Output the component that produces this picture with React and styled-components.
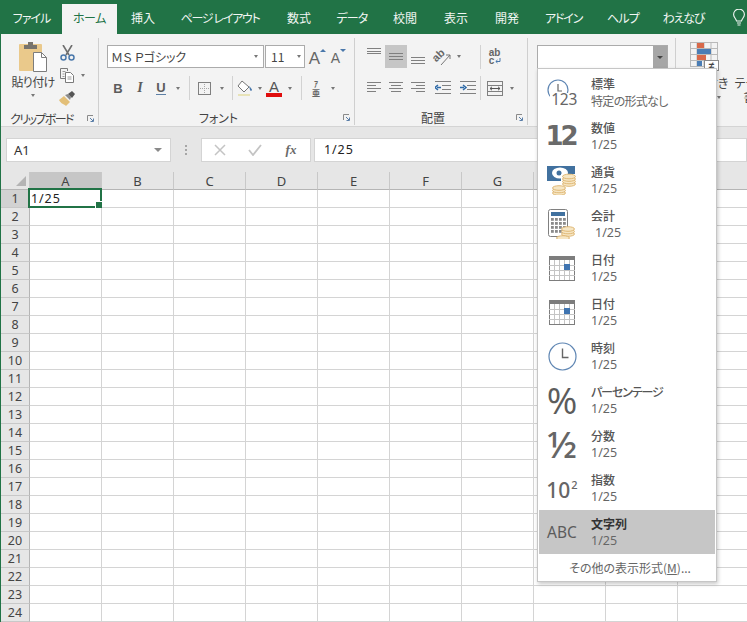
import React from 'react'
import styled, { createGlobalStyle } from 'styled-components';

const JP = `"Noto Sans CJK JP", "Noto Sans", sans-serif`;
const LATIN = `"Noto Sans", "Noto Sans CJK JP", sans-serif`;

const Global = createGlobalStyle`
    html, body { margin: 0; padding: 0; background: #fff; }
    * { box-sizing: border-box; }
`;

const Shell = styled.div`
    position: relative;
    width: 747px;
    height: 622px;
    overflow: hidden;
    border-left: 1px solid #217346;
    background: #fff;
    font-family: ${JP};
    font-feature-settings: "palt";
    font-size: 12px;
    color: #444;
`;

const Tabs = styled.div`
    display: flex;
    height: 34px;
    padding-top: 4px;
    background: #217346;
`;

const Tab = styled.div`
    flex: none;
    width: ${p => p.$w}px;
    display: flex;
    align-items: center;
    justify-content: center;
    padding-bottom: 3px;
    font-size: 12px;
    letter-spacing: ${p => p.$ls ?? 0}px;
    color: ${p => p.$active ? '#217346' : '#f1f6f3'};
    background: ${p => p.$active ? '#f3f3f3' : 'transparent'};
`;

const Ribbon = styled.div`
    display: flex;
    height: 93px;
    padding: 4px 0 1px;
    overflow: hidden;
    background: #f3f3f3;
    border-bottom: 1px solid #d4d4d4;
`;

const Group = styled.div`
    flex: none;
    display: flex;
    flex-direction: column;
    width: ${p => p.$w}px;
    padding-top: ${p => p.$pt ?? 7}px;
    border-right: ${p => p.$open ? 'none' : '1px solid #cfcfcf'};
`;

const GroupBody = styled.div`
    flex: 1;
    display: flex;
    flex-direction: ${p => p.$row ? 'row' : 'column'};
    gap: ${p => p.$gap ?? 0}px;
    padding-left: ${p => p.$pl}px;
`;

const GroupLabel = styled.div`
    flex: none;
    display: flex;
    align-items: center;
    height: 16px;
    font-size: 12px;
    color: #444;
`;

const LabelText = styled.span`
    flex: 1;
    text-align: center;
    white-space: nowrap;
    letter-spacing: ${p => p.$ls ?? 0}px;
`;

const Launcher = styled.span`
    flex: none;
    width: 16px;
    display: flex;
    justify-content: center;
`;

const ToolRow = styled.div`
    display: flex;
    align-items: center;
    height: ${p => p.$h ?? 23}px;
`;

const Btn = styled.div`
    flex: none;
    width: ${p => p.$w}px;
    height: 100%;
    display: flex;
    align-items: center;
    justify-content: center;
    background: ${p => p.$active ? '#c6c6c6' : 'transparent'};
    color: #5c5c5c;
`;

const Drop = styled.div`
    flex: none;
    width: ${p => p.$w ?? 8}px;
    height: 100%;
    display: flex;
    align-items: center;
    justify-content: center;
    &::after {
        content: '';
        border-left: 2.5px solid transparent;
        border-right: 2.5px solid transparent;
        border-top: 3px solid #777;
    }
`;

const Sep = styled.div`
    flex: none;
    width: 1px;
    height: 24px;
    margin-left: ${p => p.$ml ?? 0}px;
    background: #d2d2d2;
`;

const Select = styled.div`
    flex: none;
    display: flex;
    align-items: center;
    width: ${p => p.$w}px;
    height: 23px;
    margin-right: 1px;
    padding-left: ${p => p.$pl ?? 5}px;
    background: #fff;
    border: 1px solid #ababab;
    font-size: 12px;
    color: #444;
`;

const SelectText = styled.span`
    flex: 1;
    white-space: nowrap;
`;

const BoldLetter = styled.span`
    font-family: "Liberation Sans", sans-serif;
    font-weight: 700;
    font-size: 13px;
    color: #5c5c5c;
`;

const ItalicLetter = styled.span`
    font-family: "Liberation Serif", serif;
    font-style: italic;
    font-weight: 700;
    font-size: 14px;
    color: #5c5c5c;
`;

const UnderLetter = styled(BoldLetter)`
    border-bottom: 1.5px solid #5c7fa5;
    line-height: 13px;
`;

const GrowLetter = styled.span`
    position: relative;
    font-family: "Liberation Sans", sans-serif;
    font-size: ${p => p.$shrink ? 14 : 17}px;
    line-height: 17px;
    margin-top: 3px;
    margin-right: 5px;
    color: #666;
    &::after {
        content: '';
        position: absolute;
        top: ${p => p.$shrink ? -1 : -1}px;
        right: -6px;
        border-left: 3px solid transparent;
        border-right: 3px solid transparent;
        ${p => p.$shrink ? 'border-top: 3px solid #4a78ab;' : 'border-bottom: 3px solid #4a78ab;'}
    }
`;

const ColorLetter = styled.span`
    width: 16px;
    height: 17px;
    text-align: center;
    font-family: "Liberation Sans", sans-serif;
    font-size: 15px;
    line-height: 13px;
    color: #555;
    border-bottom: 4px solid #e00d0d;
`;

const PhoneticStack = styled.span`
    display: flex;
    flex-direction: column;
    align-items: center;
    font-size: 8px;
    line-height: 9px;
    font-weight: 700;
    color: #666;
`;

const OrientBox = styled.span`
    position: relative;
    display: block;
    width: 20px;
    height: 18px;
`;

const OrientText = styled.span`
    position: absolute;
    left: 0;
    top: 2px;
    font-family: "Liberation Sans", sans-serif;
    font-weight: 700;
    font-size: 11px;
    line-height: 11px;
    color: #666;
    transform: rotate(-45deg);
`;

const OrientArrow = styled.svg`
    position: absolute;
    left: 0;
    top: 0;
`;

const WrapStack = styled.span`
    display: flex;
    flex-direction: column;
    font-family: "Liberation Sans", sans-serif;
    font-weight: 700;
    font-size: 10px;
    line-height: 8px;
    color: #666;
`;

const WrapLine = styled.span`
    display: flex;
    align-items: center;
    gap: 1px;
`;

const PasteColumn = styled.div`
    flex: none;
    width: 48px;
    display: flex;
    flex-direction: column;
    align-items: center;
`;

const PasteLabel = styled.span`
    margin-top: 2px;
    line-height: 14px;
    white-space: nowrap;
    letter-spacing: -0.7px;
`;

const PasteDrop = styled(Drop)`
    height: 12px;
`;

const SmallColumn = styled.div`
    flex: none;
    display: flex;
    flex-direction: column;
`;

const NumberSelect = styled.div`
    display: flex;
    justify-content: flex-end;
    width: 131px;
    height: 24px;
    background: #fff;
    border: 1px solid #ababab;
`;

const NumberArrow = styled.div`
    width: 14px;
    display: flex;
    align-items: center;
    justify-content: center;
    background: #a6a6a6;
    &::after {
        content: '';
        border-left: 3px solid transparent;
        border-right: 3px solid transparent;
        border-top: 3px solid #444;
    }
`;

const StyleColumn = styled.div`
    flex: none;
    width: ${p => p.$w}px;
    display: flex;
    flex-direction: column;
    align-items: center;
    line-height: 14px;
    white-space: nowrap;
`;

const StyleIcon = styled.div`
    position: relative;
    width: 30px;
    height: 34px;
`;

const NotEqual = styled.span`
    position: absolute;
    left: 14px;
    top: 18px;
    width: 15px;
    height: 11px;
    display: flex;
    align-items: center;
    justify-content: center;
    background: #fff;
    border: 1px solid #8a8a8a;
    font-family: "Liberation Sans", sans-serif;
    font-size: 10px;
    line-height: 9px;
    font-weight: 700;
    color: #444;
`;

const StyleLine = styled.div`
    display: flex;
    align-items: center;
    gap: 4px;
    height: 14px;
    color: #444;
`;

const FormulaBar = styled.div`
    display: flex;
    align-items: center;
    height: 45px;
    padding: 0 0 0 5px;
    background: #e6e6e6;
`;

const NameBox = styled.div`
    flex: none;
    display: flex;
    align-items: center;
    width: 165px;
    height: 24px;
    padding: 0 6px 0 7px;
    background: #fff;
    border: 1px solid #d4d4d4;
    font-family: ${LATIN};
    font-size: 13px;
    color: #333;
`;

const NameText = styled.span`
    flex: 1;
`;

const NameArrow = styled.span`
    border-left: 4px solid transparent;
    border-right: 4px solid transparent;
    border-top: 4px solid #8a8a8a;
    margin-right: 2px;
`;

const Dots = styled.div`
    flex: none;
    width: 30px;
    display: flex;
    justify-content: center;
`;

const FormulaTools = styled.div`
    flex: none;
    display: flex;
    align-items: center;
    width: 110px;
    height: 24px;
    background: #fff;
    border: 1px solid #d4d4d4;
`;

const FormulaTool = styled.div`
    flex: none;
    width: ${p => p.$w}px;
    display: flex;
    justify-content: center;
`;

const Fx = styled.span`
    font-family: "Liberation Serif", serif;
    font-style: italic;
    font-weight: 700;
    font-size: 13px;
    color: #6a6a6a;
`;

const FormulaInput = styled.div`
    flex: 1;
    display: flex;
    align-items: center;
    height: 24px;
    margin-left: 3px;
    padding-left: 9px;
    background: #fff;
    border: 1px solid #d4d4d4;
`;

const CellValue = styled.span`
    font-family: ${LATIN};
    font-size: 12.5px;
    letter-spacing: 0.9px;
    color: #222;
`;

const Sheet = styled.div`
    display: grid;
    grid-template-columns: 29px repeat(10, 72px);
    grid-auto-rows: 18px;
    font-family: ${LATIN};
`;

const Corner = styled.div`
    display: flex;
    align-items: flex-end;
    justify-content: flex-end;
    padding: 0 3px 3px 0;
    background: #e6e6e6;
    border-right: 1px solid #c8c8c8;
    border-bottom: 1px solid #b5b5b5;
`;

const ColHead = styled.div`
    display: flex;
    align-items: center;
    justify-content: center;
    font-size: 13px;
    color: #444;
    background: ${p => p.$active ? '#c6c6c6' : '#e6e6e6'};
    border-right: 1px solid #c8c8c8;
    border-bottom: 1px solid #b5b5b5;
`;

const RowHead = styled.div`
    display: flex;
    align-items: center;
    justify-content: center;
    font-size: 12.5px;
    color: #444;
    background: ${p => p.$active ? '#d2d2d2' : '#e6e6e6'};
    border-right: 1px solid #b5b5b5;
    border-bottom: 1px solid #c8c8c8;
`;

const Cell = styled.div`
    position: relative;
    display: flex;
    align-items: center;
    padding-left: 1px;
    border-right: 1px solid #d4d4d4;
    border-bottom: 1px solid #d4d4d4;
`;

const Selection = styled.div`
    position: absolute;
    left: -2px;
    top: -2px;
    right: -1px;
    bottom: -1px;
    border: 2px solid #217346;
    &::after {
        content: '';
        position: absolute;
        right: -3px;
        bottom: -3px;
        width: 6px;
        height: 6px;
        background: #217346;
        border: 1px solid #fff;
    }
`;

const Menu = styled.div`
    position: absolute;
    left: 536px;
    top: 68px;
    width: 180px;
    height: 514px;
    padding: 1px;
    background: #fff;
    border: 1px solid #c6c6c6;
    box-shadow: 1px 2px 4px rgba(0, 0, 0, 0.22);
`;

const MenuItem = styled.div`
    display: flex;
    align-items: center;
    height: 44px;
    background: ${p => p.$active ? '#c6c6c6' : 'transparent'};
`;

const MenuIcon = styled.div`
    flex: none;
    width: 46px;
    height: 44px;
    display: flex;
    align-items: center;
    justify-content: center;
    color: #666;
    font-family: ${LATIN};
`;

const MenuText = styled.div`
    margin-left: 6px;
    display: flex;
    flex-direction: column;
`;

const MenuTitle = styled.span`
    height: 17px;
    line-height: 17px;
    font-size: 12px;
    letter-spacing: ${p => p.$ls ?? 0}px;
    font-weight: ${p => p.$active ? 700 : 500};
    color: ${p => p.$active ? '#333' : '#555'};
`;

const MenuValue = styled.span`
    height: 17px;
    line-height: 17px;
    padding-left: ${p => p.$indent ? 4 : 0}px;
    font-family: ${LATIN};
    font-size: 12.5px;
    color: #666;
`;

const MenuNote = styled(MenuValue)`
    font-family: ${JP};
    font-size: 12px;
    letter-spacing: -0.7px;
`;

const MenuFooter = styled.div`
    height: 27px;
    display: flex;
    align-items: center;
    justify-content: center;
    padding-left: 6px;
    font-size: 12px;
    color: #666;
`;

const GeneralStack = styled.div`
    display: flex;
    flex-direction: column;
    align-items: flex-start;
    width: 30px;
`;

const GeneralNumber = styled.span`
    align-self: flex-end;
    margin-top: -8px;
    padding-left: 1px;
    height: 13px;
    background: #fff;
    font-size: 15.5px;
    line-height: 13px;
    letter-spacing: -0.3px;
    color: #666;
`;

const Twelve = styled.span`
    font-family: "DejaVu Sans", sans-serif;
    font-weight: 700;
    font-size: 26px;
    letter-spacing: -3px;
    margin-left: -3px;
    color: #6a6a6a;
`;

const Percent = styled.span`
    font-family: "Open Sans", sans-serif;
    font-size: 37px;
    line-height: 44px;
    color: #5c5c5c;
`;

const Half = styled.span`
    font-family: "Noto Sans", sans-serif;
    font-weight: 500;
    font-size: 37px;
    line-height: 44px;
    color: #666;
`;

const Power = styled.span`
    font-size: 21px;
    font-weight: 500;
    color: #666;
    margin-top: 4px;
`;

const PowerSup = styled.sup`
    font-size: 11px;
    margin-left: 1px;
    vertical-align: 9px;
    line-height: 0;
`;

const Abc = styled.span`
    font-size: 15.5px;
    color: #5c5c5c;
`;

// icons

const Lines = ({ w = 14, h = 24, segs, color = '#808080' }) => (
    <svg width={w} height={h} viewBox={`0 0 ${w} ${h}`}>
        {segs.map(([a, b, y], i) => <line key={i} x1={a} x2={b} y1={y + .5} y2={y + .5} stroke={color} />)}
    </svg>
);

const LauncherIcon = () => (
    <svg width="7" height="7" viewBox="0 0 7 7">
        <path d="M0.5 6V.5H6" fill="none" stroke="#8a8a8a" />
        <path d="M3 3l3 3M6.5 3.5v3h-3" fill="none" stroke="#5a7ea8" />
    </svg>
);

const PasteIcon = () => (
    <svg width="28" height="32" viewBox="0 0 28 32">
        <rect x="0" y="3" width="23" height="27" rx="1" fill="#eac98b" />
        <path d="M5 8V4h4V1h5v3h4v4z" fill="#77736c" />
        <path d="M14.500 11.500h8l5 5v14h-13z" fill="#fff" stroke="#7d7d7d" />
        <path d="M22.500 11.500v5h5" fill="none" stroke="#7d7d7d" />
    </svg>
);

const CutIcon = () => (
    <svg width="15" height="16" viewBox="0 0 15 16">
        <path d="M3 0l6 10M12 0L6 10" stroke="#6e6e6e" strokeWidth="1.6" fill="none" />
        <circle cx="3.500" cy="12.500" r="2.500" fill="none" stroke="#4a78ab" strokeWidth="1.5" />
        <circle cx="11.500" cy="12.500" r="2.500" fill="none" stroke="#4a78ab" strokeWidth="1.5" />
    </svg>
);

const CopyIcon = () => (
    <svg width="15" height="15" viewBox="0 0 15 15" fill="none" stroke="#7a7a7a">
        <path d="M7.500 3V.5h-7v10H5" />
        <path d="M5.500 4.500h5l3 3v7h-8z" fill="#fff" />
        <path d="M2.500 3.500h3M2.500 6h2M2.500 8.500h2M7.500 9h4M7.500 11h4" stroke="#9a9a9a" />
    </svg>
);

const PainterIcon = () => (
    <svg width="16" height="15" viewBox="0 0 16 15">
        <path d="M0 9l5-4 6 6-4 4C5 13 2 13 0 9z" fill="#e3bf78" />
        <path d="M6 4l3-1 3 3-1 3z" fill="#8a8a8a" />
        <path d="M9 3l4-3 3 3-3 4z" fill="#555" />
    </svg>
);

const BorderIcon = () => (
    <svg width="13" height="13" viewBox="0 0 13 13" fill="none">
        <rect x=".5" y=".5" width="12" height="12" stroke="#7f7f7f" />
        <path d="M6.500 2v10M2 6.500h10" stroke="#a8a8a8" strokeDasharray="1 1" />
    </svg>
);

const FillIcon = () => (
    <svg width="17" height="17" viewBox="0 0 17 17">
        <path d="M5 1l7 6-5 5-6-6z" fill="#fff" stroke="#767676" />
        <path d="M12 6c2 2 3 3 3 4s-2 1-2 0z" fill="#4a78ab" />
        <path d="M1 15h12" stroke="#e8e3b8" strokeWidth="2" />
    </svg>
);

const OrientIcon = () => (
    <OrientBox>
        <OrientText>ab</OrientText>
        <OrientArrow width="20" height="18" viewBox="0 0 20 18">
            <path d="M9 17L18 7M18 7h-4M18 7v4" fill="none" stroke="#777" />
        </OrientArrow>
    </OrientBox>
);

const WrapIcon = () => (
    <WrapStack>
        <span>ab</span>
        <WrapLine>
            <span>c</span>
            <svg width="6" height="6" viewBox="0 0 6 6">
                <path d="M5 0v3.500H1M2.500 2L.8 3.500 2.500 5" fill="none" stroke="#4a78ab" />
            </svg>
        </WrapLine>
    </WrapStack>
);

const IndentIcon = ({ inc }) => (
    <svg width="17" height="14" viewBox="0 0 17 14">
        <path d="M0 .5h16M7 4.500h9M7 8.500h9M0 12.500h16" stroke="#808080" />
        <path d={inc ? 'M0 6.500h4M3 4l3 2.500L3 9' : 'M6 6.500H2M3 4L0 6.500 3 9'} fill="none" stroke="#2e6aa8" strokeWidth="1.500" />
    </svg>
);

const MergeIcon = () => (
    <svg width="16" height="15" viewBox="0 0 16 15" fill="none" stroke="#808080">
        <rect x=".5" y=".5" width="15" height="14" />
        <path d="M.5 4.500h15M.5 10.500h15" />
        <path d="M3 7.500h10M5 5.800L3 7.500l2 1.700M11 5.800l2 1.700-2 1.700" stroke="#555" />
    </svg>
);

const CondFormatIcon = () => (
    <svg width="28" height="25" viewBox="0 0 28 25">
        <g fill="none" stroke="#b9b9b9">
            <rect x=".5" y=".5" width="27" height="24" />
            <path d="M7 .5v24M14 .5v24M21 .5v24M.5 6.500h27M.5 12.500h27M.5 18.500h27" />
        </g>
        <rect x="7" y="1" width="7" height="5" fill="#d8694a" />
        <rect x="7" y="7" width="14" height="5" fill="#4a7db5" />
        <rect x="7" y="13" width="9" height="5" fill="#d8694a" />
        <rect x="7" y="19" width="5" height="5" fill="#4a7db5" />
    </svg>
);

const ClockIcon = () => (
    <svg width="29" height="29" viewBox="0 0 29 29" fill="none">
        <circle cx="14.500" cy="14.500" r="13.500" stroke="#5f86b3" strokeWidth="1.200" />
        <path d="M14.500 6.500v9h6" stroke="#666" strokeWidth="1.400" />
    </svg>
);

const GeneralIcon = () => (
    <GeneralStack>
        <svg width="22" height="22" viewBox="0 0 22 22" fill="none">
            <circle cx="11" cy="11" r="10" stroke="#5f86b3" strokeWidth="1.200" />
            <path d="M11 5v7h4" stroke="#666" strokeWidth="1.200" />
        </svg>
        <GeneralNumber>123</GeneralNumber>
    </GeneralStack>
);

const Coins = ({ x, y, n = 3 }) => (
    <g>
        {Array.from({ length: n }).map((_, i) => (
            <ellipse key={i} cx={x} cy={y - i * 2.5} rx="6.500" ry="2.300" fill="#f6e6c4" stroke="#dcb26c" strokeWidth=".9" />
        ))}
    </g>
);

const CurrencyIcon = () => (
    <svg width="30" height="30" viewBox="0 0 30 30">
        <rect x="0" y="1" width="28" height="15" fill="#41719f" />
        <ellipse cx="13" cy="8" rx="8" ry="5.500" fill="#fff" />
        <circle cx="12" cy="8" r="2.500" fill="#41719f" />
        <rect x="14" y="9" width="15" height="12" fill="#fff" />
        <Coins x="22" y="19" n="4" />
        <Coins x="12" y="28" n="3" />
    </svg>
);

const CalculatorIcon = () => (
    <svg width="28" height="30" viewBox="0 0 28 30">
        <rect x=".5" y=".5" width="19" height="27" rx="2" fill="#fff" stroke="#808080" />
        <rect x="3" y="3" width="14" height="4" fill="#41719f" />
        {[9, 13, 17, 21].map(y => [3, 7, 11, 15].map(x => (
            <rect key={`${x}-${y}`} x={x} y={y} width="2.800" height="2.800" fill="#8a8a8a" />
        )))}
        <Coins x="20" y="25" n="3" />
        <Coins x="15" y="29" n="1" />
    </svg>
);

const CalendarIcon = () => (
    <svg width="26" height="25" viewBox="0 0 26 25">
        <rect x=".5" y=".5" width="25" height="24" fill="#fff" stroke="#7d7d7d" />
        <rect x="0" y="0" width="26" height="4" fill="#7d7d7d" />
        <path d="M5.500 4v20M10.500 4v20M15.500 4v20M20.500 4v20M0 9.500h26M0 14.500h26M0 19.500h26" stroke="#c4c4c4" fill="none" />
        <rect x="15" y="8" width="6" height="6" fill="#3f74b0" />
    </svg>
);

const X = () => (
    <svg width="12" height="12" viewBox="0 0 12 12">
        <path d="M1 1l10 10M11 1L1 11" stroke="#c4c4c4" strokeWidth="1.500" />
    </svg>
);

const Check = () => (
    <svg width="14" height="12" viewBox="0 0 14 12">
        <path d="M1 6l4 5 8-10" fill="none" stroke="#c4c4c4" strokeWidth="1.800" />
    </svg>
);

const DotsIcon = () => (
    <svg width="3" height="12" viewBox="0 0 3 12" fill="#a6a6a6">
        <rect x="0" y="1" width="2" height="2" />
        <rect x="0" y="5" width="2" height="2" />
        <rect x="0" y="9" width="2" height="2" />
    </svg>
);

const Bulb = () => (
    <svg width="12" height="18" viewBox="0 0 12 18" fill="none" stroke="#f1f6f3" strokeWidth="1.100">
        <path d="M3.500 12C3 9.500.6 8.500.6 5.500a5.400 5.400 0 0 1 10.800 0c0 3-2.400 4-2.900 6.500z" />
        <path d="M4 14h4M4.500 16h3" />
    </svg>
);

const CornerMark = () => (
    <svg width="10" height="10" viewBox="0 0 10 10">
        <path d="M10 0v10H0z" fill="#b4b4b4" />
    </svg>
);

// data

const tabs = [
    { text: 'ファイル', w: 61, ls: -1 },
    { text: 'ホーム', w: 55, active: true, ls: -0.5 },
    { text: '挿入', w: 52 },
    { text: 'ページ レイアウト', w: 102, ls: -1.3 },
    { text: '数式', w: 56 },
    { text: 'データ', w: 50, ls: -0.8 },
    { text: '校閲', w: 56 },
    { text: '表示', w: 46 },
    { text: '開発', w: 56 },
    { text: 'アドイン', w: 57, ls: -1.2 },
    { text: 'ヘルプ', w: 62, ls: -0.8 },
    { text: 'わえなび', w: 59, ls: -1.2 },
];

const formats = [
    { icon: <GeneralIcon />, title: '標準', note: '特定の形式なし' },
    { icon: <Twelve>12</Twelve>, title: '数値', value: '1/25' },
    { icon: <CurrencyIcon />, title: '通貨', value: '1/25' },
    { icon: <CalculatorIcon />, title: '会計', value: '1/25', indent: true },
    { icon: <CalendarIcon />, title: '日付', value: '1/25' },
    { icon: <CalendarIcon />, title: '日付', value: '1/25' },
    { icon: <ClockIcon />, title: '時刻', value: '1/25' },
    { icon: <Percent>%</Percent>, title: 'パーセンテージ', value: '1/25', ls: -1.1 },
    { icon: <Half>½</Half>, title: '分数', value: '1/25' },
    { icon: <Power>10<PowerSup>2</PowerSup></Power>, title: '指数', value: '1/25' },
    { icon: <Abc>ABC</Abc>, title: '文字列', value: '1/25', active: true },
];

const columns = 'ABCDEFGHIJ'.split('');
const rows = Array.from({ length: 24 }, (_, i) => i + 1);

const Label = ({ children, launcher, ls }) => (
    <GroupLabel>
        <LabelText $ls={ls}>{children}</LabelText>
        <Launcher>{launcher && <LauncherIcon />}</Launcher>
    </GroupLabel>
);

const App = () => {
    return (
        <Shell>
            <Global />
            <Tabs>
                {tabs.map(t => <Tab key={t.text} $w={t.w} $active={t.active} $ls={t.ls}>{t.text}</Tab>)}
                <Tab $w={52}><Bulb /></Tab>
            </Tabs>

            <Ribbon>
                <Group $w={98} $pt={3}>
                    <GroupBody $row $pl={8}>
                        <PasteColumn>
                            <PasteIcon />
                            <PasteLabel>貼り付け</PasteLabel>
                            <PasteDrop />
                        </PasteColumn>
                        <SmallColumn>
                            <ToolRow><Btn $w={20}><CutIcon /></Btn></ToolRow>
                            <ToolRow><Btn $w={20}><CopyIcon /></Btn><Drop $w={12} /></ToolRow>
                            <ToolRow><Btn $w={20}><PainterIcon /></Btn></ToolRow>
                        </SmallColumn>
                    </GroupBody>
                    <Label launcher ls={-1.6}>クリップボード</Label>
                </Group>

                <Group $w={256}>
                    <GroupBody $pl={8} $gap={8}>
                        <ToolRow>
                            <Select $w={157} $pl={3}><SelectText>ＭＳ Ｐゴシック</SelectText><Drop $w={14} /></Select>
                            <Select $w={40}><SelectText>11</SelectText><Drop $w={10} /></Select>
                            <Btn $w={22}><GrowLetter>A</GrowLetter></Btn>
                            <Btn $w={20}><GrowLetter $shrink>A</GrowLetter></Btn>
                        </ToolRow>
                        <ToolRow $h={24}>
                            <Btn $w={22}><BoldLetter>B</BoldLetter></Btn>
                            <Btn $w={22}><ItalicLetter>I</ItalicLetter></Btn>
                            <Btn $w={20}><UnderLetter>U</UnderLetter></Btn>
                            <Drop $w={14} />
                            <Sep $ml={4} />
                            <Btn $w={28}><BorderIcon /></Btn>
                            <Drop $w={8} />
                            <Sep $ml={6} />
                            <Btn $w={24}><FillIcon /></Btn>
                            <Drop $w={6} />
                            <Btn $w={22}><ColorLetter>A</ColorLetter></Btn>
                            <Drop $w={10} />
                            <Sep $ml={6} />
                            <Btn $w={28}><PhoneticStack><span>ｱ</span><span>亜</span></PhoneticStack></Btn>
                            <Drop $w={6} />
                        </ToolRow>
                    </GroupBody>
                    <Label launcher>フォント</Label>
                </Group>

                <Group $w={173}>
                    <GroupBody $pl={8} $gap={8}>
                        <ToolRow>
                            <Btn $w={22}><Lines h={23} segs={[[0, 14, 3], [0, 14, 6], [0, 14, 8]]} /></Btn>
                            <Btn $w={22} $active><Lines h={23} segs={[[0, 14, 8], [0, 14, 11], [0, 14, 14]]} /></Btn>
                            <Btn $w={22}><Lines h={23} segs={[[0, 14, 12], [0, 14, 15], [0, 14, 18]]} /></Btn>
                            <Btn $w={26}><OrientIcon /></Btn>
                            <Drop $w={8} />
                            <Sep $ml={17} />
                            <Btn $w={28}><WrapIcon /></Btn>
                        </ToolRow>
                        <ToolRow $h={24}>
                            <Btn $w={22}><Lines segs={[[0, 14, 6], [0, 9, 9], [0, 14, 12], [0, 9, 15]]} /></Btn>
                            <Btn $w={22}><Lines segs={[[0, 14, 6], [2, 12, 9], [0, 14, 12], [2, 12, 15]]} /></Btn>
                            <Btn $w={22}><Lines segs={[[0, 14, 6], [5, 14, 9], [0, 14, 12], [5, 14, 15]]} /></Btn>
                            <Btn $w={28}><IndentIcon /></Btn>
                            <Btn $w={22}><IndentIcon inc /></Btn>
                            <Sep $ml={1} />
                            <Btn $w={28}><MergeIcon /></Btn>
                            <Drop $w={6} />
                        </ToolRow>
                    </GroupBody>
                    <Label launcher>配置</Label>
                </Group>

                <Group $w={148}>
                    <GroupBody $pl={9}>
                        <NumberSelect><NumberArrow /></NumberSelect>
                    </GroupBody>
                </Group>

                <Group $w={100} $pt={4} $open>
                    <GroupBody $row $pl={0}>
                        <StyleColumn $w={58}>
                            <StyleIcon><CondFormatIcon /><NotEqual>≠</NotEqual></StyleIcon>
                            <StyleLine>条件付き</StyleLine>
                            <StyleLine>書式<Drop $w={5} /></StyleLine>
                        </StyleColumn>
                        <StyleColumn $w={76}>
                            <StyleIcon />
                            <StyleLine>テーブルとして</StyleLine>
                            <StyleLine>書式設定<Drop $w={5} /></StyleLine>
                        </StyleColumn>
                    </GroupBody>
                </Group>
            </Ribbon>

            <FormulaBar>
                <NameBox><NameText>A1</NameText><NameArrow /></NameBox>
                <Dots><DotsIcon /></Dots>
                <FormulaTools>
                    <FormulaTool $w={36}><X /></FormulaTool>
                    <FormulaTool $w={34}><Check /></FormulaTool>
                    <FormulaTool $w={38}><Fx>fx</Fx></FormulaTool>
                </FormulaTools>
                <FormulaInput><CellValue>1/25</CellValue></FormulaInput>
            </FormulaBar>

            <Sheet>
                <Corner><CornerMark /></Corner>
                {columns.map(c => <ColHead key={c} $active={c === 'A'}>{c}</ColHead>)}
                {rows.map(r => (
                    <React.Fragment key={r}>
                        <RowHead $active={r === 1}>{r}</RowHead>
                        {columns.map(c => (
                            <Cell key={c}>
                                {r === 1 && c === 'A' && <><CellValue>1/25</CellValue><Selection /></>}
                            </Cell>
                        ))}
                    </React.Fragment>
                ))}
            </Sheet>

            <Menu>
                {formats.map((f, i) => (
                    <MenuItem key={i} $active={f.active}>
                        <MenuIcon>{f.icon}</MenuIcon>
                        <MenuText>
                            <MenuTitle $active={f.active} $ls={f.ls}>{f.title}</MenuTitle>
                            {f.note
                                ? <MenuNote>{f.note}</MenuNote>
                                : <MenuValue $indent={f.indent}>{f.value}</MenuValue>}
                        </MenuText>
                    </MenuItem>
                ))}
                <MenuFooter><span>その他の表示形式(<u>M</u>)...</span></MenuFooter>
            </Menu>
        </Shell>
    )
}

export default App
